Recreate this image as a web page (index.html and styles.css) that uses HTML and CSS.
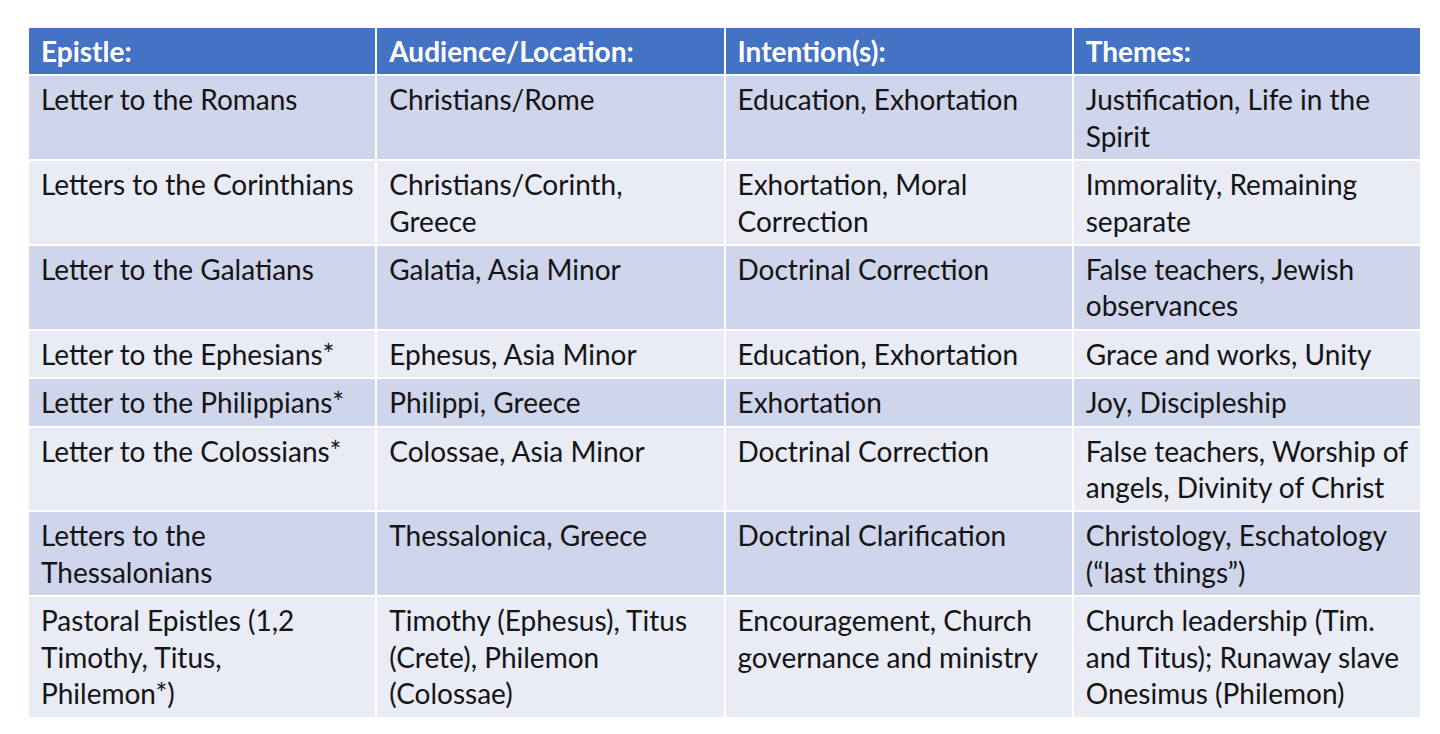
FILE: index.html
```html
<!DOCTYPE html>
<html lang="en">
<head>
<meta charset="utf-8">
<title>Pauline Epistles</title>
<link rel="stylesheet" href="styles.css">
</head>
<body>
<main class="page">
  <table class="epistles">
    <colgroup>
      <col class="col"><col class="col"><col class="col"><col class="col">
    </colgroup>
    <thead>
      <tr>
        <th>Epistle:</th>
        <th>Audience/Location:</th>
        <th>Intention(s):</th>
        <th>Themes:</th>
      </tr>
    </thead>
    <tbody>
      <tr>
        <td>Letter to the Romans</td>
        <td>Christians/Rome</td>
        <td>Education, Exhortation</td>
        <td>Justification, Life in the<br>Spirit</td>
      </tr>
      <tr>
        <td>Letters to the Corinthians</td>
        <td>Christians/Corinth,<br>Greece</td>
        <td>Exhortation, Moral<br>Correction</td>
        <td>Immorality, Remaining<br>separate</td>
      </tr>
      <tr>
        <td>Letter to the Galatians</td>
        <td>Galatia, Asia Minor</td>
        <td>Doctrinal Correction</td>
        <td>False teachers, Jewish<br>observances</td>
      </tr>
      <tr>
        <td>Letter to the Ephesians*</td>
        <td>Ephesus, Asia Minor</td>
        <td>Education, Exhortation</td>
        <td>Grace and works, Unity</td>
      </tr>
      <tr>
        <td>Letter to the Philippians*</td>
        <td>Philippi, Greece</td>
        <td>Exhortation</td>
        <td>Joy, Discipleship</td>
      </tr>
      <tr>
        <td>Letter to the Colossians*</td>
        <td>Colossae, Asia Minor</td>
        <td>Doctrinal Correction</td>
        <td>False teachers, Worship of<br>angels, Divinity of Christ</td>
      </tr>
      <tr>
        <td>Letters to the<br>Thessalonians</td>
        <td>Thessalonica, Greece</td>
        <td>Doctrinal Clarification</td>
        <td>Christology, Eschatology<br>(“last things”)</td>
      </tr>
      <tr>
        <td>Pastoral Epistles (1,2<br>Timothy, Titus,<br>Philemon*)</td>
        <td>Timothy (Ephesus), Titus<br>(Crete), Philemon<br>(Colossae)</td>
        <td>Encouragement, Church<br>governance and ministry</td>
        <td>Church leadership (Tim.<br>and Titus); Runaway slave<br>Onesimus (Philemon)</td>
      </tr>
    </tbody>
  </table>
</main>
</body>
</html>
```

FILE: styles.css
```css
html, body {
  margin: 0;
  padding: 0;
  background: #ffffff;
}

.page {
  padding: 26px 0 0 27px;
}

.epistles {
  width: 1395px;
  border-collapse: separate;
  border-spacing: 2px;
  table-layout: fixed;
  font-family: Lato, "Open Sans", sans-serif;
  font-size: 28px;
  line-height: 36.4px;
  color: #141416;
}

.col {
  width: 25%;
}

.epistles th,
.epistles td {
  padding: 5px 8px 5px 12px;
  text-align: left;
  vertical-align: top;
  white-space: nowrap;
}

.epistles th {
  background: #4472c4;
  color: #ffffff;
  font-weight: 700;
}

.epistles tbody tr:nth-child(odd) td {
  background: #cfd5ea;
}

.epistles tbody tr:nth-child(even) td {
  background: #e9ebf5;
}
```
